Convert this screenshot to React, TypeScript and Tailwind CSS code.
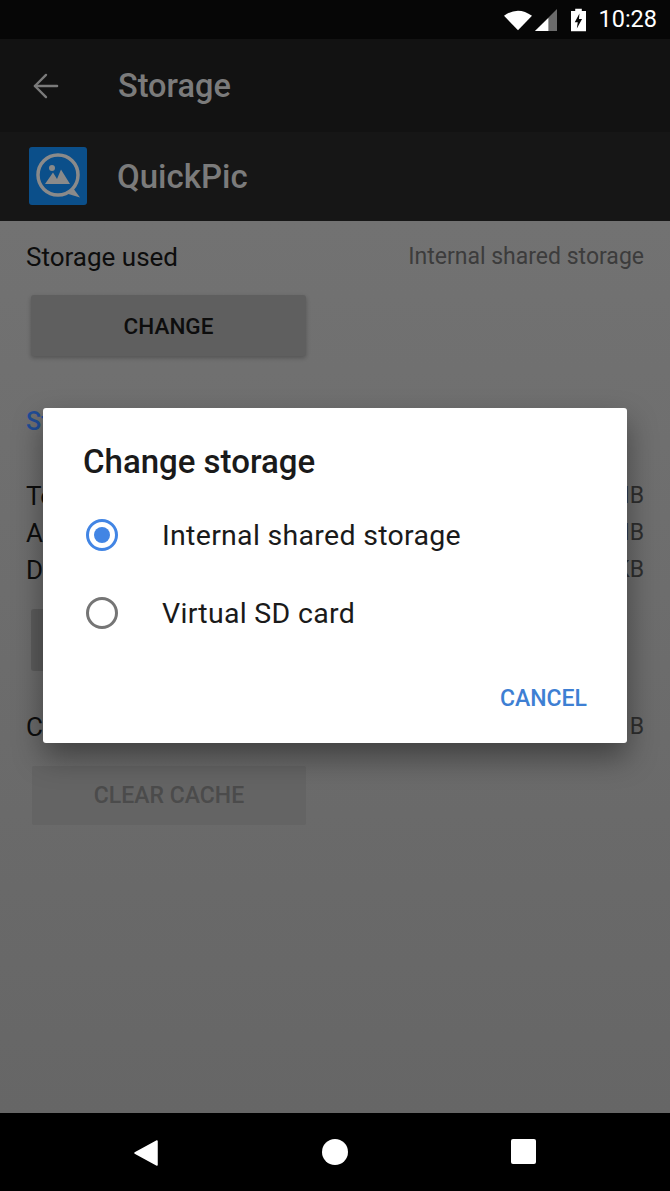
import React from 'react';
import { ArrowLeft } from 'lucide-react';

function Row({ label, value, className }: { label: string; value: string; className?: string }) {
  return (
    <div className={`flex justify-between items-center h-[37px] text-[26px] text-[#0d0d0d] ${className ?? ''}`}>
      <span>{label}</span>
      <span className="text-[23px] text-[#2e2e2e]">{value}</span>
    </div>
  );
}

function QuickPicLogo() {
  return (
    <svg viewBox="0 0 58 58" className="w-[58px] h-[58px]">
      <rect width="58" height="58" rx="3" fill="#0b4f8a" />
      <circle cx="29" cy="28" r="20" fill="none" stroke="#8a8a8a" strokeWidth="3.5" />
      <path d="M36 46 L51 50.5 L44 41 Z" fill="#8a8a8a" />
      <circle cx="23" cy="21" r="3" fill="#8a8a8a" />
      <path d="M16 37 L24 25.5 L28 32 L32 22.5 L41 37 Z" fill="#8a8a8a" />
    </svg>
  );
}

function StatusIcons() {
  return (
    <div className="flex items-center">
      <svg viewBox="0 0 30 22" className="w-[28px] h-[22px] mr-[3px]">
        <path d="M0 6.5 Q15 -4.5 30 6.5 L15 22 Z" fill="#fff" />
      </svg>
      <svg viewBox="0 0 23 23" className="w-[22px] h-[22px] mr-[14px]">
        <path d="M23 0 V23 H0 Z" fill="#6b6b6b" />
        <path d="M14 9.5 V23 H0 Z" fill="#fff" />
      </svg>
      <svg viewBox="0 0 16 24" className="w-[15px] h-[24px] mr-[12px]">
        <path d="M0 2.5 H4.5 V0 H11.5 V2.5 H16 V24 H0 Z M9 5 L4 14.5 H7.2 L6.2 21 L11.8 11 H8.5 Z" fill="#fff" fillRule="evenodd" />
      </svg>
    </div>
  );
}

export default function App() {
  return (
    <div className="relative w-[670px] h-[1191px] flex flex-col overflow-hidden bg-[#686868] font-['Roboto',sans-serif]">
      <div className="h-[39px] bg-[#060606] flex items-center justify-end pr-[13px]">
        <StatusIcons />
        <span className="text-[23.5px] text-white">10:28</span>
      </div>

      <div className="h-[93px] bg-[#121212] flex items-center pl-[27px]">
        <ArrowLeft className="w-[38px] h-[38px] text-[#7a7a7a]" strokeWidth={1.5} />
        <span className="ml-[53px] pt-[2px] text-[32.5px] font-medium text-[#7b7b7b]">Storage</span>
      </div>

      <div className="h-[89px] bg-[#161616] flex items-center pl-[29px] pb-[2px]">
        <QuickPicLogo />
        <span className="ml-[30px] pt-[3px] text-[33px] font-medium text-[#7b7b7b]">QuickPic</span>
      </div>

      <div className="flex-1 px-[26px] bg-gradient-to-b from-[#727272] to-[#666666]">
        <div className="flex justify-between items-center h-[37px] mt-[18px] text-[26px] text-[#0d0d0d]">
          <span>Storage used</span>
          <span className="text-[23px] text-[#3c3c3c]">Internal shared storage</span>
        </div>
        <div className="ml-[5px] mt-[19px] pt-[2px] w-[275px] h-[61px] rounded-[3px] bg-[#5f5f5f] shadow-[0_2px_4px_rgba(0,0,0,0.25)] flex items-center justify-center text-[22.5px] font-medium text-[#0d0d0d]">
          CHANGE
        </div>

        <div className="mt-[47px] h-[37px] flex items-center text-[25px] font-medium text-[#1f4c96]">Storage</div>

        <Row label="Total" value="21.05 MB" className="mt-[38px]" />
        <Row label="App" value="19.88 MB" />
        <Row label="Data" value="964 KB" />

        <div className="ml-[5px] mt-[20px] w-[275px] h-[62px] rounded-[3px] bg-[#5c5c5c]" />

        <Row label="Cache" value="0 B" className="mt-[38px]" />

        <div className="ml-[6px] mt-[20px] pt-[2px] w-[274px] h-[59px] rounded-[2px] bg-[#646464] flex items-center justify-center text-[23px] font-medium text-[#4b4b4b]">
          CLEAR CACHE
        </div>
      </div>

      <div className="h-[78px] bg-black flex items-center">
        <svg viewBox="0 0 24 26" className="absolute left-[134px] bottom-[25px] w-[24px] h-[26px]">
          <path d="M23 1 V25 L1 13 Z" fill="#fff" stroke="#fff" strokeWidth="1.5" strokeLinejoin="round" />
        </svg>
        <div className="absolute left-[322px] bottom-[26px] w-[26px] h-[26px] rounded-full bg-white" />
        <div className="absolute left-[511px] bottom-[27px] w-[25px] h-[25px] rounded-[2px] bg-white" />
      </div>

      <div className="absolute left-[43px] top-[408px] w-[584px] h-[335px] rounded-[3px] bg-white shadow-[0_14px_30px_rgba(0,0,0,0.4)] flex flex-col">
        <div className="mt-[33px] ml-[40px] h-[42px] flex items-center text-[33px] font-medium text-[#1a1a1a]">Change storage</div>
        <div className="mt-[14px] h-[78px] flex items-center ml-[43px]">
          <div className="w-[32px] h-[32px] mb-[3px] rounded-full border-[3px] border-[#4285e4] flex items-center justify-center">
            <div className="w-[16px] h-[16px] rounded-full bg-[#4285e4]" />
          </div>
          <span className="ml-[44px] text-[28.5px] tracking-[0.3px] text-[#1a1a1a]">Internal shared storage</span>
        </div>
        <div className="h-[78px] flex items-center ml-[43px]">
          <div className="w-[32px] h-[32px] mb-[2px] rounded-full border-[3px] border-[#757575]" />
          <span className="ml-[44px] text-[28.5px] tracking-[0.3px] text-[#1a1a1a]">Virtual SD card</span>
        </div>
        <div className="flex justify-end mt-[29px] mr-[40px] text-[23px] font-medium text-[#3e7fd3]">CANCEL</div>
      </div>
    </div>
  );
}
